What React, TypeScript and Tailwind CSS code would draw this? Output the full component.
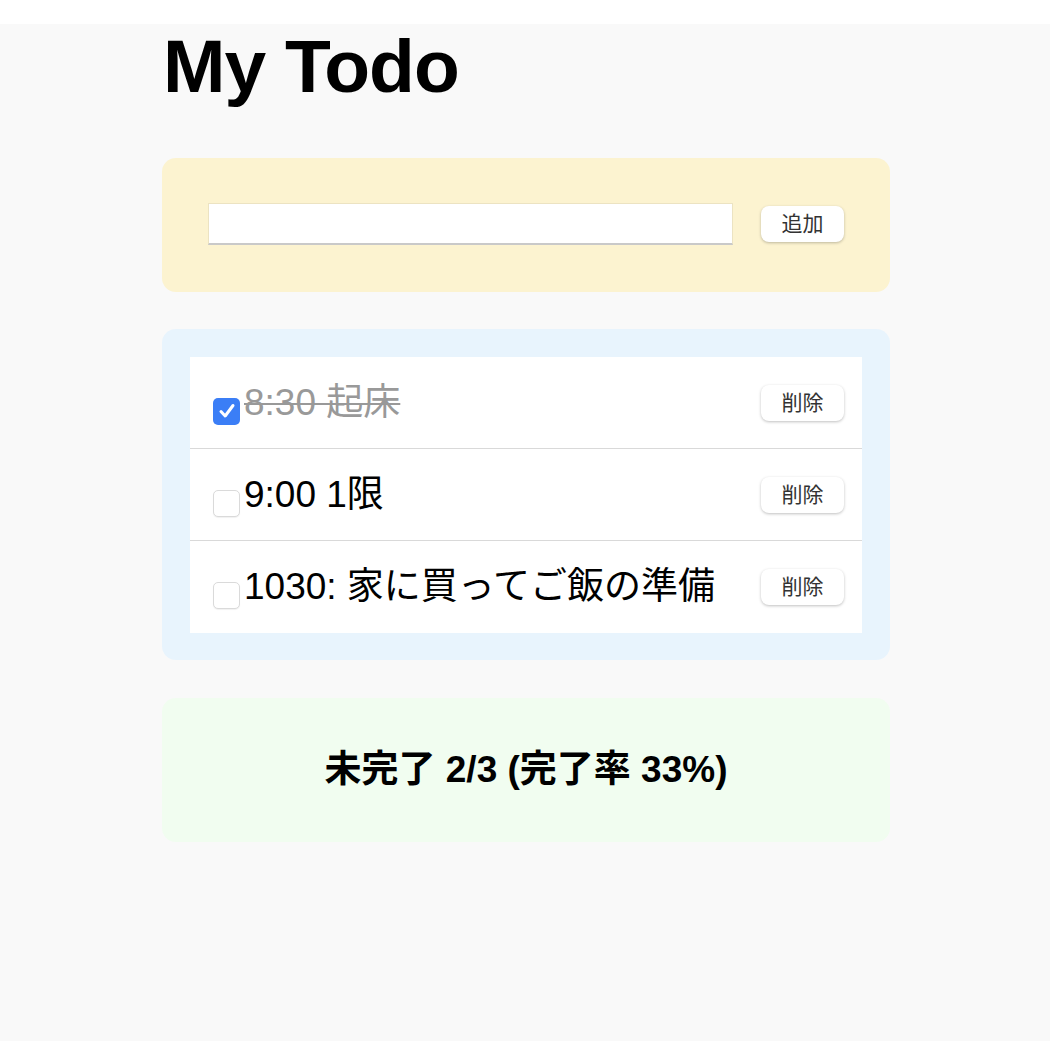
import { useState } from "react";

type Todo = { id: number; text: string; done: boolean };

const initialTodos: Todo[] = [
  { id: 1, text: "8:30 起床", done: true },
  { id: 2, text: "9:00 1限", done: false },
  { id: 3, text: "1030: 家に買ってご飯の準備", done: false },
];

function Check({ checked, onToggle }: { checked: boolean; onToggle: () => void }) {
  return (
    <button
      type="button"
      role="checkbox"
      aria-checked={checked}
      onClick={onToggle}
      className={
        checked
          ? "mt-[17px] flex h-[27px] w-[27px] shrink-0 items-center justify-center rounded-[5px] bg-[#3b7ef6]"
          : "mt-[17px] flex h-[27px] w-[27px] shrink-0 items-center justify-center rounded-[5px] border border-[#dadada] bg-white shadow-[0_1px_1px_rgba(0,0,0,0.06)]"
      }
    >
      {checked && (
        <svg viewBox="0 0 20 20" className="h-[20px] w-[20px]" aria-hidden="true">
          <path d="M4 10.5 8.2 15 16 4.5" fill="none" stroke="#fff" strokeWidth="3" strokeLinecap="round" strokeLinejoin="round" />
        </svg>
      )}
    </button>
  );
}

export default function App() {
  const [todos, setTodos] = useState<Todo[]>(initialTodos);
  const [draft, setDraft] = useState("");

  const remaining = todos.filter((t) => !t.done).length;
  const rate = todos.length ? Math.floor(((todos.length - remaining) / todos.length) * 100) : 0;

  const add = () => {
    if (!draft.trim()) return;
    setTodos([...todos, { id: Date.now(), text: draft, done: false }]);
    setDraft("");
  };

  return (
    <div className="min-h-screen bg-white pt-[24px] font-['Liberation_Sans','Noto_Sans_CJK_JP',sans-serif] text-black">
      <div className="min-h-[1017px] bg-[#f9f9f9]">
        <div className="mx-auto w-[728px] translate-x-[1px] pb-10">
          <h1 className="pl-[1px] text-[75px] font-bold leading-[84px] tracking-[-1px]">My Todo</h1>

          <div className="mt-[50px] flex items-center gap-[28px] rounded-[14px] bg-[#fcf3d0] px-[46px] pt-[45px] pb-[47px]">
            <input
              value={draft}
              onChange={(e) => setDraft(e.target.value)}
              className="h-[42px] flex-1 border border-[#ece3c2] border-b-2 border-b-[#c9c9c9] bg-white px-2 text-[20px] outline-none"
            />
            <button
              type="button"
              onClick={add}
              className="h-[36px] w-[83px] rounded-lg bg-white text-[21px] text-[#333] shadow-[0_1px_3px_rgba(0,0,0,0.25)]"
            >
              追加
            </button>
          </div>

          <div className="mt-[37px] rounded-[14px] bg-[#e8f4fd] px-[28px] pt-[28px] pb-[27px]">
            <ul className="bg-white">
              {todos.map((todo, i) => (
                <li
                  key={todo.id}
                  className={
                    i < todos.length - 1
                      ? "flex h-[92px] items-center border-b border-[#d9d9d9] pl-[23px] pr-[18px]"
                      : "flex h-[92px] items-center pl-[23px] pr-[18px]"
                  }
                >
                  <Check
                    checked={todo.done}
                    onToggle={() =>
                      setTodos(todos.map((t) => (t.id === todo.id ? { ...t, done: !t.done } : t)))
                    }
                  />
                  <span
                    className={
                      todo.done
                        ? "ml-[4px] text-[37px] leading-[42px] text-[#999] line-through decoration-[2px]"
                        : "ml-[4px] text-[37px] leading-[42px]"
                    }
                  >
                    {todo.text}
                  </span>
                  <button
                    type="button"
                    onClick={() => setTodos(todos.filter((t) => t.id !== todo.id))}
                    className="ml-auto h-[36px] w-[83px] shrink-0 rounded-lg bg-white text-[21px] text-[#333] shadow-[0_1px_3px_rgba(0,0,0,0.25)]"
                  >
                    削除
                  </button>
                </li>
              ))}
            </ul>
          </div>

          <div className="mt-[38px] flex h-[144px] items-center justify-center rounded-[14px] bg-[#f1fdf0]">
            <p className="text-[37px] font-bold leading-[42px]">
              未完了 {remaining}/{todos.length} (完了率 {rate}%)
            </p>
          </div>
        </div>
      </div>
    </div>
  );
}
